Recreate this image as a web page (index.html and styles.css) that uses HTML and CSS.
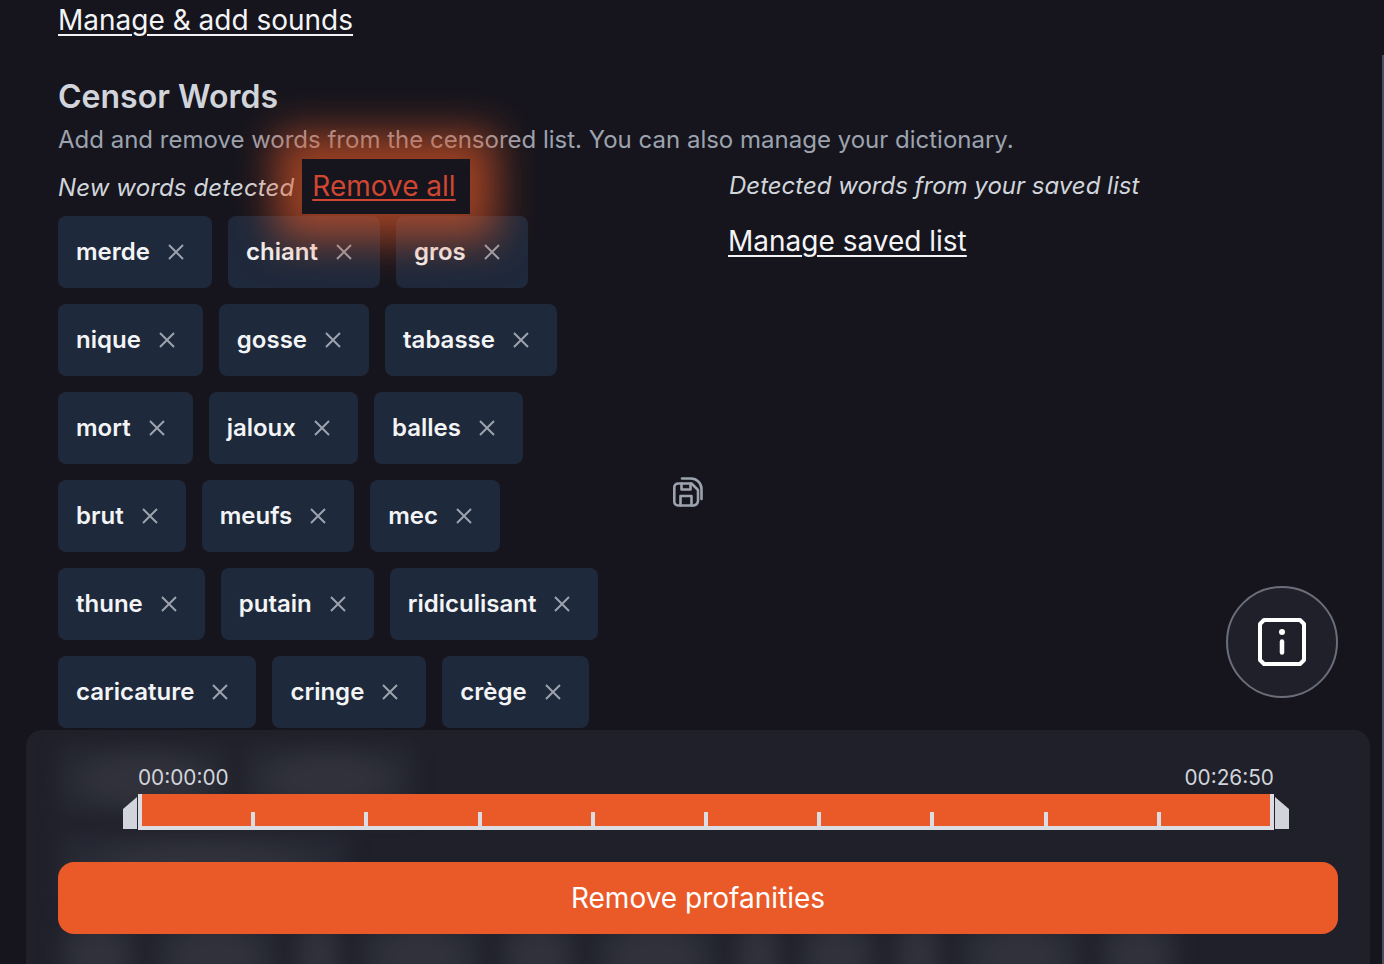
FILE: index.html
```html
<!DOCTYPE html>
<html lang="en">
<head>
<meta charset="UTF-8"/>
<title>Censor Words</title>
<link rel="stylesheet" href="styles.css">
</head>
<body>
<svg class="sprite" width="0" height="0"><symbol id="x" viewBox="0 0 18 18"><path d="M2 2l14 14M16 2L2 16" fill="none" stroke="currentColor" stroke-width="2"/></symbol></svg>

<main class="page">
  <a class="link top-link" href="#">Manage &amp; add sounds</a>
  <h2>Censor Words</h2>
  <p class="sub">Add and remove words from the censored list. You can also manage your dictionary.</p>

  <div class="cols">
    <section class="col-new">
      <div class="new-head">
        <em>New words detected</em>
        <a class="remove-all" href="#"><span>Remove all</span></a>
      </div>
      <div class="tags">
        <span class="tag">merde<svg><use href="#x"/></svg></span>
        <span class="tag">chiant<svg><use href="#x"/></svg></span>
        <span class="tag">gros<svg><use href="#x"/></svg></span>
        <span class="tag">nique<svg><use href="#x"/></svg></span>
        <span class="tag">gosse<svg><use href="#x"/></svg></span>
        <span class="tag">tabasse<svg><use href="#x"/></svg></span>
        <span class="tag">mort<svg><use href="#x"/></svg></span>
        <span class="tag">jaloux<svg><use href="#x"/></svg></span>
        <span class="tag">balles<svg><use href="#x"/></svg></span>
        <span class="tag">brut<svg><use href="#x"/></svg></span>
        <span class="tag">meufs<svg><use href="#x"/></svg></span>
        <span class="tag">mec<svg><use href="#x"/></svg></span>
        <span class="tag">thune<svg><use href="#x"/></svg></span>
        <span class="tag">putain<svg><use href="#x"/></svg></span>
        <span class="tag">ridiculisant<svg><use href="#x"/></svg></span>
        <span class="tag">caricature<svg><use href="#x"/></svg></span>
        <span class="tag">cringe<svg><use href="#x"/></svg></span>
        <span class="tag">crège<svg><use href="#x"/></svg></span>
      </div>
    </section>

    <div class="save-col">
      <svg class="save" viewBox="0 0 30 30" fill="none" stroke="currentColor" stroke-width="2.6" stroke-linejoin="round" stroke-linecap="round">
        <path d="M9 1.500h9a10.500 10.500 0 0 1 10.500 10.500v10"/>
        <path d="M5 6.500h13.500l6.500 6.500v11a5 5 0 0 1-4 4.500H5a3.700 3.700 0 0 1-3.700-3.700V10.200A3.700 3.700 0 0 1 5 6.500z"/>
        <path d="M8.500 6.500v6h9v-6M7.500 28.500v-9.500h11v9.500"/>
      </svg>
    </div>

    <section class="col-saved">
      <em>Detected words from your saved list</em>
      <a class="link" href="#">Manage saved list</a>
    </section>
  </div>
</main>

<button class="info" type="button" aria-label="Info">
  <svg viewBox="0 0 48 48" fill="none" stroke="#fff">
    <path d="M6 2h36l4 4v36l-4 4H6l-4-4V6z" stroke-width="4" stroke-linejoin="round"/>
    <circle cx="24" cy="14" r="3" fill="#fff" stroke="none"/>
    <path d="M24 23.500v11" stroke-width="4.500" stroke-linecap="round"/>
  </svg>
</button>

<footer class="panel">
  <!-- blurred tags showing through the panel -->
  <div class="ghosts">
    <div class="ghost-row"><span class="ghost g-l"></span><span class="ghost g-l"></span></div>
    <div class="ghost-row"><span class="ghost g-xl"></span></div>
    <div class="ghost-row">
      <span class="ghost g-s"></span><span class="ghost g-m"></span><span class="ghost g-xs"></span>
      <span class="ghost g-m"></span><span class="ghost g-s"></span><span class="ghost g-m"></span>
      <span class="ghost g-xs"></span><span class="ghost g-s"></span><span class="ghost g-xs"></span>
      <span class="ghost g-m"></span><span class="ghost g-s"></span>
    </div>
  </div>
  <div class="times"><span>00:00:00</span><span>00:26:50</span></div>
  <div class="timeline">
    <svg class="handle" viewBox="0 0 14 32"><path d="M0 12L14 0v32H0z"/></svg>
    <div class="track">
      <div class="seg"><i></i></div><div class="seg"><i></i></div><div class="seg"><i></i></div>
      <div class="seg"><i></i></div><div class="seg"><i></i></div><div class="seg"><i></i></div>
      <div class="seg"><i></i></div><div class="seg"><i></i></div><div class="seg"><i></i></div>
      <div class="seg"></div>
    </div>
    <svg class="handle" viewBox="0 0 14 32"><path d="M0 0l14 12v20H0z"/></svg>
  </div>
  <button class="go" type="button">Remove profanities</button>
</footer>

<div class="scrollbar"></div>
</body>
</html>
```

FILE: styles.css
```css
:root{
  --bg:#16151d;--panel:#20202a;--tag:#1e293b;--accent:#ea5a29;
  --muted:#9ca3af;--text:#e5e7eb;--soft:#d1d5db;
}
*,*::before,*::after{box-sizing:border-box;margin:0;padding:0}
html,body{height:100%;overflow:hidden}
body{background:var(--bg);color:var(--text);font-family:Inter,"Liberation Sans",sans-serif;position:relative}
a{color:inherit}
em{font-style:italic}
.sprite{position:absolute}

/* page flow */
.page{padding:2px 0 0 58px}
.link{display:inline-block;font-size:28px;line-height:36px;color:#f3f4f6;text-decoration:underline;text-underline-offset:4px;text-decoration-thickness:2px}
h2{margin-top:39px;font-size:32px;line-height:40px;font-weight:600;color:var(--soft)}
.sub{margin-top:7px;font-size:24px;line-height:32px;color:var(--muted)}

.cols{display:grid;grid-template-columns:596px 75px 1fr;margin-top:3px}

/* left column */
.new-head{display:flex;align-items:center;gap:8px;height:55px}
.new-head em{font-size:24px;letter-spacing:.12px;padding-top:1px;color:var(--soft)}
.remove-all{position:relative;z-index:2;display:block;height:55px;padding:0 14px 0 10px;line-height:55px;font-size:28px;color:#cf4632;background:var(--bg);text-decoration:underline;text-decoration-thickness:2px;text-underline-offset:3px;box-shadow:0 0 42px 26px rgba(226,88,40,.66)}
.tags{display:flex;flex-wrap:wrap;gap:16px;margin-top:2px}
.tag{display:flex;align-items:center;gap:17px;height:72px;padding:0 27px 2px 18px;border-radius:8px;background:var(--tag);font-size:24px;font-weight:600;color:#f3f4f6}
.tag svg{width:18px;height:18px;margin-top:2px;color:var(--muted)}

/* save icon */
.save-col{padding:318px 0 0 19px}
.save{display:block;width:30px;height:30px;color:var(--muted)}

/* right column */
.col-saved{display:flex;flex-direction:column;align-items:flex-start;gap:22px;padding-top:12px}
.col-saved em{font-size:24px;line-height:30px;color:var(--soft)}
.col-saved .link{margin-left:-1px}

/* floating bits */
.info{position:absolute;left:1226px;top:586px;width:112px;height:112px;display:grid;place-items:center;border-radius:50%;border:2px solid #6b6e7a;background:var(--panel)}
.info svg{width:48px;height:48px}
.scrollbar{position:absolute;top:55px;right:0;bottom:0;width:2px;background:#4b4e5c}

/* bottom panel */
.panel{position:absolute;left:26px;right:14px;top:730px;height:260px;padding:36px 32px 0;border-radius:16px;background:var(--panel);overflow:hidden}
.ghosts{position:absolute;left:32px;top:14px;display:flex;flex-direction:column;gap:16px;filter:blur(9px)}
.ghost-row{display:flex;gap:15px;height:72px}
.ghost{display:block;border-radius:8px;background:radial-gradient(closest-side,#30313a 55%,#252732)}
.g-xs{width:50px}
.g-s{width:80px}
.g-m{width:125px}
.g-l{width:170px}
.g-xl{width:290px}
.times,.timeline,.go{position:relative}
.times{display:flex;justify-content:space-between;padding:0 64px 0 80px;font-size:20.800px;line-height:24px;color:var(--soft)}
.timeline{display:flex;align-items:flex-end;margin:4px 49px 0 65px;height:36px}
.handle{flex:none;width:14px;height:32px;fill:#d1d5db;margin-bottom:1px}
.track{flex:1;display:flex;height:36px;margin:0 1px;padding:0 2px;border-bottom:4px solid #dcdde3;box-shadow:inset 4px 0 #dcdde3,inset -4px 0 #dcdde3;background:var(--accent)}
.seg{flex:1;display:flex;justify-content:flex-end;align-items:flex-end}
.seg i{width:4px;height:14px;margin-right:-2px;background:#dcdde3}
.go{display:block;width:100%;height:72px;margin-top:32px;border:none;border-radius:16px;background:var(--accent);color:#fff;font-family:inherit;font-size:28px}
```
